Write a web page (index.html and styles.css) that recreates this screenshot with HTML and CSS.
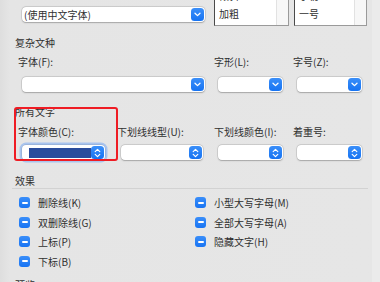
FILE: index.html
```html
<!DOCTYPE html>
<html lang="zh-CN">
<head>
<meta charset="utf-8">
<link rel="stylesheet" href="styles.css">
</head>
<body>
<div class="dialog">
  <div class="content">
    <div class="row toprow">
      <div class="popup p-wide top-popup">
        <span class="ptext">(使用中文字体)</span>
        <span class="pbtn"><svg width="7" height="5" viewBox="0 0 7 5"><path d="M1 1.2 L3.5 3.6 L6 1.2" fill="none" stroke="#fff" stroke-width="1.3" stroke-linecap="round" stroke-linejoin="round"/></svg></span>
      </div>
      <div class="listbox lb1">
        <div class="items"><div class="item">倾斜</div><div class="item">加粗</div></div>
        <div class="sb"></div>
      </div>
      <div class="listbox lb2">
        <div class="items"><div class="item">小初</div><div class="item">一号</div></div>
        <div class="sb"></div>
      </div>
    </div>

    <div class="heading h-complex">复杂文种</div>
    <div class="row fieldrow r-complex">
      <div class="field c-wide">
        <div class="label">字体(F):</div>
        <div class="popup p-wide"><span class="pbtn"><svg width="7" height="5" viewBox="0 0 7 5"><path d="M1 1.2 L3.5 3.6 L6 1.2" fill="none" stroke="#fff" stroke-width="1.3" stroke-linecap="round" stroke-linejoin="round"/></svg></span></div>
      </div>
      <div class="field c-mid">
        <div class="label">字形(L):</div>
        <div class="popup p-small"><span class="pbtn"><svg width="7" height="5" viewBox="0 0 7 5"><path d="M1 1.2 L3.5 3.6 L6 1.2" fill="none" stroke="#fff" stroke-width="1.3" stroke-linecap="round" stroke-linejoin="round"/></svg></span></div>
      </div>
      <div class="field c-last">
        <div class="label">字号(Z):</div>
        <div class="popup p-small"><span class="pbtn"><svg width="7" height="5" viewBox="0 0 7 5"><path d="M1 1.2 L3.5 3.6 L6 1.2" fill="none" stroke="#fff" stroke-width="1.3" stroke-linecap="round" stroke-linejoin="round"/></svg></span></div>
      </div>
    </div>

    <div class="heading h-all">所有文字</div>
    <div class="row fieldrow r-all">
      <div class="field c-color">
        <div class="label">字体颜色(C):</div>
        <div class="popup p-color focused">
          <span class="swatch"></span>
          <span class="pbtn"><svg width="7" height="10" viewBox="0 0 7 10"><path d="M1.2 3.6 L3.5 1.4 L5.8 3.6 M1.2 6.4 L3.5 8.6 L5.8 6.4" fill="none" stroke="#fff" stroke-width="1.2" stroke-linecap="round" stroke-linejoin="round"/></svg></span>
        </div>
      </div>
      <div class="field c-under">
        <div class="label">下划线线型(U):</div>
        <div class="popup p-under"><span class="pbtn"><svg width="7" height="10" viewBox="0 0 7 10"><path d="M1.2 3.6 L3.5 1.4 L5.8 3.6 M1.2 6.4 L3.5 8.6 L5.8 6.4" fill="none" stroke="#fff" stroke-width="1.2" stroke-linecap="round" stroke-linejoin="round"/></svg></span></div>
      </div>
      <div class="field c-mid">
        <div class="label">下划线颜色(I):</div>
        <div class="popup p-small"><span class="pbtn"><svg width="7" height="10" viewBox="0 0 7 10"><path d="M1.2 3.6 L3.5 1.4 L5.8 3.6 M1.2 6.4 L3.5 8.6 L5.8 6.4" fill="none" stroke="#fff" stroke-width="1.2" stroke-linecap="round" stroke-linejoin="round"/></svg></span></div>
      </div>
      <div class="field c-last">
        <div class="label">着重号:</div>
        <div class="popup p-small"><span class="pbtn"><svg width="7" height="10" viewBox="0 0 7 10"><path d="M1.2 3.6 L3.5 1.4 L5.8 3.6 M1.2 6.4 L3.5 8.6 L5.8 6.4" fill="none" stroke="#fff" stroke-width="1.2" stroke-linecap="round" stroke-linejoin="round"/></svg></span></div>
      </div>
    </div>

    <div class="heading h-effects">效果</div>
    <div class="sep"></div>
    <div class="effects">
      <div class="col col-left">
        <div class="check"><span class="box"></span><span>删除线(K)</span></div>
        <div class="check"><span class="box"></span><span>双删除线(G)</span></div>
        <div class="check"><span class="box"></span><span>上标(P)</span></div>
        <div class="check"><span class="box"></span><span>下标(B)</span></div>
      </div>
      <div class="col col-right">
        <div class="check"><span class="box"></span><span>小型大写字母(M)</span></div>
        <div class="check"><span class="box"></span><span>全部大写字母(A)</span></div>
        <div class="check"><span class="box"></span><span>隐藏文字(H)</span></div>
      </div>
    </div>
    <div class="heading h-preview">预览</div>
  </div>
  <div class="redbox"></div>
</div>
</body>
</html>
```

FILE: styles.css
```css
* { box-sizing: border-box; }
html, body {
  margin: 0;
  padding: 0;
  width: 380px;
  height: 282px;
  overflow: hidden;
  background: #e6e6e6;
}
body {
  font-family: "Noto Sans CJK SC", "Noto Sans", sans-serif;
  font-size: 10px;
  color: #2f2f2f;
}
.dialog {
  position: relative;
  width: 380px;
  height: 282px;
  overflow: hidden;
  background: linear-gradient(to right, #dedede 0, #e5e5e5 10px, #e6e6e6 372px, #ebebeb 372px);
}
.content {
  padding-left: 14px;
  width: 372px;
}
.row {
  display: flex;
  align-items: flex-start;
}

/* top row */
.toprow { height: 26px; }
.top-popup { margin-left: 8px; margin-top: 7px; }
.listbox {
  display: flex;
  margin-top: -14px;
  height: 40px;
  background: #fff;
  border: 1px solid #9a9a9a;
  border-top-color: #4a4a4a;
  border-left-color: #4a4a4a;
}
.lb1 { margin-left: 9px; width: 75px; }
.lb2 { margin-left: 5px; width: 73px; }
.items { flex: 1; padding-left: 4px; }
.item { height: 18px; line-height: 18px; }
.sb {
  width: 12px;
  background: #f7f7f7;
  border-left: 1px solid #e2e2e2;
}

/* popups */
.popup {
  position: relative;
  height: 15px;
  background: #fff;
  border-radius: 4px;
  box-shadow: 0 0 0 0.5px rgba(0,0,0,0.16), 0 0.5px 1.5px rgba(0,0,0,0.22);
  display: flex;
  align-items: center;
  flex-shrink: 0;
}
.ptext { padding-left: 2px; line-height: 15px; flex: 1; }
.pbtn {
  position: absolute;
  right: 1px;
  top: 1px;
  width: 13px;
  height: 13px;
  border-radius: 3.5px;
  background: linear-gradient(#3b8ff9, #1673f2);
  display: flex;
  align-items: center;
  justify-content: center;
}
.field .popup { margin-left: 4px; }
.p-wide { width: 183px; }
.p-small { width: 65px; }
.p-color { width: 83px; }
.p-under { width: 82px; }
.focused {
  box-shadow: 0 0 0 0.5px rgba(0,0,0,0.16), 0 0 0 2.5px rgba(120,170,245,0.55);
}
.swatch {
  margin-left: 7px;
  width: 62px;
  height: 10px;
  background: #2a4c9c;
}

/* headings & labels */
.heading {
  height: 14px;
  line-height: 14px;
  padding-left: 1px;
}
.h-complex { margin-top: 10px; }
.h-all { margin-top: 13px; }
.h-effects { margin-top: 14px; }
.h-preview { margin-top: 7px; }
.field {
  display: flex;
  flex-direction: column;
  flex-shrink: 0;
}
.label { height: 14px; line-height: 14px; white-space: nowrap; }
.r-complex { margin-top: 5px; }
.r-complex .label { margin-bottom: 8px; }
.r-all { margin-top: 6px; }
.r-all .label { margin-bottom: 6px; }
.c-wide { width: 196px; margin-left: 4px; }
.c-mid { width: 79px; }
.c-last { width: 79px; }
.c-color { width: 99px; margin-left: 4px; }
.c-under { width: 97px; }

/* effects */
.sep {
  margin-left: -2px;
  width: 356px;
  height: 1px;
  background: #d2d2d2;
}
.effects {
  display: flex;
  margin-top: 4px;
}
.col { display: flex; flex-direction: column; }
.col-left { width: 181px; padding-left: 5px; }
.check {
  display: flex;
  align-items: center;
  height: 19.5px;
  gap: 8px;
  white-space: nowrap;
}
.box {
  position: relative;
  width: 11px;
  height: 11px;
  border-radius: 3px;
  background: linear-gradient(#3a8ef9, #1874f3);
  flex-shrink: 0;
}
.box::after {
  content: "";
  position: absolute;
  left: 2.5px;
  top: 4.5px;
  width: 6px;
  height: 2px;
  border-radius: 1px;
  background: #fff;
}

/* annotation */
.redbox {
  position: absolute;
  left: 14px;
  top: 107px;
  width: 104px;
  height: 54px;
  border: 2px solid #ef1c24;
  border-radius: 3px;
}
```
